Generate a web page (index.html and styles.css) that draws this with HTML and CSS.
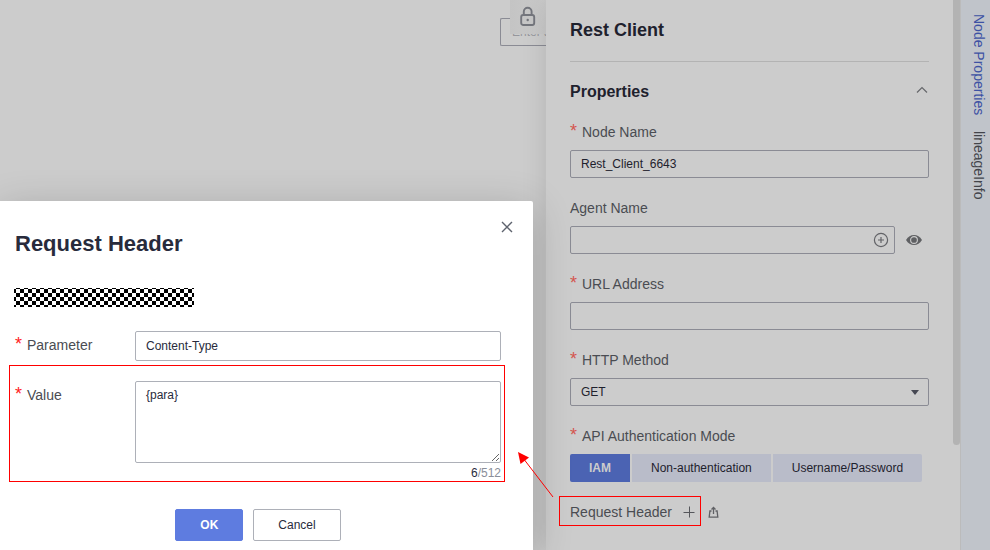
FILE: index.html
```html
<!DOCTYPE html>
<html lang="en">
<head>
    <meta charset="UTF-8">
    <meta name="viewport" content="width=device-width, initial-scale=1.0">
    <title>Rest Client</title>
    <link rel="stylesheet" href="styles.css">
</head>
<body>
    <div class="page">
        <main class="canvas">
            <input type="text" class="search" placeholder="Enter a" aria-label="Search">
            <button type="button" class="lock" aria-label="Lock">
                <svg width="16" height="20" viewBox="0 0 16 20" fill="none" stroke="#74767d" stroke-width="1.9">
                    <rect x="1.200" y="9" width="13" height="10" rx="2"/>
                    <path d="M3.8 9V5.600a3.9 3.9 0 0 1 7.8 0V9"/>
                    <circle cx="7.7" cy="14" r="1.2" fill="#74767d" stroke="none"/>
                </svg>
            </button>
        </main>
        <aside class="panel">
            <h1 class="panel-title">Rest Client</h1>
            <div class="section-head">
                <h2>Properties</h2>
                <button type="button" class="icon-btn collapse" aria-label="Collapse">
                    <svg width="12" height="8" viewBox="0 0 12 8" fill="none" stroke="#66676b" stroke-width="1.2"><path d="M1 6.5L6 1.5l5 5"/></svg>
                </button>
            </div>
            <form class="props">
                <div class="field">
                    <label for="node"><span class="star">*</span>Node Name</label>
                    <input type="text" id="node" value="Rest_Client_6643">
                </div>
                <div class="field">
                    <label for="agent">Agent Name</label>
                    <div class="agent">
                        <div class="with-icon">
                            <input type="text" id="agent">
                            <button type="button" class="icon-btn add" aria-label="Select agent">
                                <svg width="16" height="16" viewBox="0 0 16 16" fill="none" stroke="#626367" stroke-width="1.2"><circle cx="8" cy="8" r="6.6"/><path d="M5 8h6M8 5v6"/></svg>
                            </button>
                        </div>
                        <button type="button" class="icon-btn" aria-label="View">
                            <svg width="16" height="10" viewBox="0 0 16 10">
                                <path d="M0 5C2 1.6 4.8 0 8 0s6 1.6 8 5c-2 3.4-4.8 5-8 5S2 8.400 0 5z" fill="#5f6063"/>
                                <circle cx="8" cy="5" r="3.4" fill="none" stroke="#ccc" stroke-width="1.1"/>
                            </svg>
                        </button>
                    </div>
                </div>
                <div class="field">
                    <label for="url"><span class="star">*</span>URL Address</label>
                    <input type="text" id="url">
                </div>
                <div class="field">
                    <label for="method"><span class="star">*</span>HTTP Method</label>
                    <div class="with-icon">
                        <select id="method">
                            <option>GET</option>
                            <option>POST</option>
                        </select>
                        <svg class="caret" width="8" height="5" viewBox="0 0 8 5"><path d="M0 0h8L4 5z" fill="#464853"/></svg>
                    </div>
                </div>
                <div class="field">
                    <div class="label"><span class="star">*</span>API Authentication Mode</div>
                    <div class="modes">
                        <button type="button" class="mode active">IAM</button>
                        <button type="button" class="mode">Non-authentication</button>
                        <button type="button" class="mode">Username/Password</button>
                    </div>
                </div>
                <div class="header-row">
                    <div class="header-add">
                        <span>Request Header</span>
                        <button type="button" class="icon-btn" aria-label="Add header">
                            <svg width="12" height="12" viewBox="0 0 12 12" stroke="#55565b"><path d="M.5 6.500h11M6.500 .5v11"/></svg>
                        </button>
                    </div>
                    <button type="button" class="icon-btn" aria-label="Import">
                        <svg width="11" height="12" viewBox="0 0 11 12" fill="none" stroke="#606165" stroke-width="1.3"><path d="M3.500 5H1.900L1.200 11.200h8.600L9.100 5H7.500M5.500 8V1.200M3.500 3.500l2-2 2 2"/></svg>
                    </button>
                </div>
            </form>
            <div class="scroll-thumb"></div>
        </aside>
        <nav class="rail">
            <a href="#" class="current">Node Properties</a>
            <a href="#">lineageInfo</a>
        </nav>

        <div class="dialog" role="dialog" aria-labelledby="dialog-title">
            <h2 id="dialog-title">Request Header</h2>
            <button type="button" class="icon-btn close" aria-label="Close">
                <svg width="12" height="12" viewBox="0 0 12 12" stroke="#5e636e" stroke-width="1.400"><path d="M1 1l10 10M11 1L1 11"/></svg>
            </button>
            <div class="masked"></div>
            <div class="row">
                <label for="param"><span class="star">*</span>Parameter</label>
                <input type="text" id="param" value="Content-Type">
            </div>
            <div class="row marked">
                <label for="value"><span class="star">*</span>Value</label>
                <div class="value">
                    <textarea id="value">{para}</textarea>
                    <div class="count"><span>6</span>/512</div>
                </div>
            </div>
            <div class="actions">
                <button type="button" class="btn primary">OK</button>
                <button type="button" class="btn">Cancel</button>
            </div>
            <svg class="arrow" width="36" height="46" viewBox="0 0 36 46"><path d="M35 45L5 6" stroke="#f00"/><path d="M0 0l11 5.500L2.500 12z" fill="#f00"/></svg>
        </div>
    </div>
</body>
</html>
```
FILE: styles.css
```css
* {
    box-sizing: border-box;
}
body {
    margin: 0;
    font-family: "Liberation Sans", Arial, sans-serif;
    font-size: 14px;
    line-height: 20px;
    color: #4a4c52;
    background: #ccc;
}
h1, h2 {
    margin: 0;
    color: #1e212d;
}
input, select, textarea, button {
    font-family: inherit;
    font-size: 12px;
    margin: 0;
}
.page {
    position: relative;
    display: flex;
    min-height: 100vh;
    overflow: hidden;
}

/* canvas */
.canvas {
    flex: 1;
    display: flex;
    justify-content: flex-end;
    align-items: flex-start;
    position: relative;
    padding-top: 18px;
}
.search {
    width: 46px;
    height: 28px;
    padding: 0 0 0 11px;
    border: 1px solid #8a8b94;
    border-right: none;
    border-radius: 2px 0 0 2px;
    background: transparent;
}
.search::placeholder {
    color: #96979c;
}
.lock {
    position: absolute;
    top: 0;
    right: 0;
    display: flex;
    align-items: flex-start;
    width: 36px;
    height: 34px;
    padding: 6px 0 0 10px;
    border: none;
    background: linear-gradient(90deg, #c4c4c4, #cacaca);
}

/* properties panel */
.panel {
    position: relative;
    width: 415px;
    padding: 0 31px 0 24px;
    border-right: 1px solid #bbb;
    background: #ccc;
    box-shadow: 0 0 24px rgba(0, 0, 0, 0.12);
}
.panel-title {
    padding: 20px 0 21px;
    border-bottom: 1px solid #b3b3b3;
    font-size: 18px;
    line-height: 20px;
}
.section-head {
    display: flex;
    justify-content: space-between;
    align-items: center;
    height: 60px;
}
.section-head h2 {
    font-size: 16px;
}
.icon-btn {
    display: flex;
    padding: 0;
    border: none;
    background: none;
    cursor: pointer;
}
.collapse {
    padding: 0 1px 4px 0;
}
.field {
    display: flex;
    flex-direction: column;
    gap: 8px;
    margin-bottom: 20px;
}
label, .label {
    display: flex;
    align-items: baseline;
    height: 20px;
}
.star {
    width: 12px;
    font-size: 18px;
    line-height: 16px;
    color: #d4554f;
}
.props input, .props select {
    display: block;
    width: 100%;
    height: 28px;
    padding: 0 10px;
    border: 1px solid #8a8b94;
    border-radius: 2px;
    background: transparent;
    color: #1e212d;
}
.props select {
    appearance: none;
}
.agent {
    display: flex;
    align-items: center;
    gap: 11px;
    padding-right: 7px;
}
.with-icon {
    position: relative;
    flex: 1;
}
.add {
    position: absolute;
    top: 6px;
    right: 6px;
}
.caret {
    position: absolute;
    top: 12px;
    right: 10px;
}
.modes {
    display: flex;
    gap: 2px;
}
.mode {
    height: 28px;
    padding: 0 19px;
    border: none;
    background: #b9bcc9;
    color: #1e212d;
}
.mode:first-child {
    border-radius: 2px 0 0 2px;
}
.mode:last-child {
    border-radius: 0 2px 2px 0;
}
.mode.active {
    background: #4b63b3;
    color: #ccc;
    font-weight: bold;
}
.header-row {
    display: flex;
    align-items: center;
    gap: 13px;
}
.header-add {
    display: flex;
    align-items: center;
    gap: 11px;
    position: relative;
}
.header-add::after {
    content: "";
    position: absolute;
    inset: -6px -6px -4px -11px;
    border: 1px solid #f00;
    pointer-events: none;
}
.scroll-thumb {
    position: absolute;
    top: 0;
    right: 0;
    width: 7px;
    height: 445px;
    border-radius: 0 0 4px 4px;
    background: #b3b3b3;
}

/* right rail */
.rail {
    display: flex;
    flex-direction: column;
    align-items: center;
    gap: 16px;
    width: 29px;
    padding: 14px 0 0 6px;
    background: #c0c4ca;
    z-index: 1;
}
.rail a {
    writing-mode: vertical-rl;
    color: #42444a;
    text-decoration: none;
}
.rail .current {
    color: #3d52a4;
}

/* dialog */
.dialog {
    position: absolute;
    top: 201px;
    left: 0;
    right: 457px;
    bottom: 0;
    padding: 29px 32px 9px 15px;
    border-radius: 0 2px 0 0;
    background: #fff;
    box-shadow: 0 8px 40px rgba(0, 0, 0, 0.2);
}
.dialog h2 {
    font-size: 22px;
    line-height: 28px;
    color: #282b3c;
}
.close {
    position: absolute;
    top: 20px;
    right: 20px;
}
.masked {
    width: 180px;
    height: 19px;
    margin: 30px 0 24px -1px;
    background: repeating-conic-gradient(#000 0 25%, #fff 0 50%) 2px 1px / 8px 8px;
}
.row {
    display: flex;
    position: relative;
}
.row label {
    flex: 0 0 120px;
    margin-top: 4px;
}
.row .star {
    color: #f22;
}
.row input, .row textarea {
    display: block;
    width: 100%;
    height: 30px;
    padding: 0 10px;
    border: 1px solid #adb0b8;
    border-radius: 2px;
    color: #282b3c;
    background: #fff;
}
.row textarea {
    height: 82px;
    padding: 5px 10px;
    line-height: 16px;
}
.marked {
    margin-top: 20px;
}
.marked::after {
    content: "";
    position: absolute;
    inset: -16px -4px 1px -6px;
    border: 1px solid #f00;
    pointer-events: none;
}
.value {
    flex: 1;
}
.count {
    font-size: 12px;
    text-align: right;
    color: #8a8e99;
}
.count span {
    color: #282b3c;
}
.actions {
    display: flex;
    justify-content: center;
    gap: 10px;
    margin-top: 26px;
}
.btn {
    height: 32px;
    padding: 0 24px;
    border: 1px solid #adb0b8;
    border-radius: 2px;
    background: #fff;
    color: #282b3c;
}
.btn.primary {
    border-color: #5e7ce0;
    background: #5e7ce0;
    color: #fff;
    font-weight: bold;
}
.arrow {
    position: absolute;
    top: 251px;
    right: -21px;
}
```
